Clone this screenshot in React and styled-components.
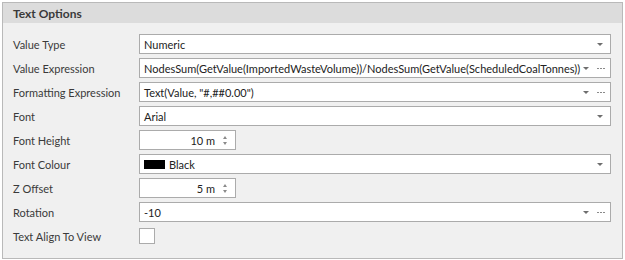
import React from "react";
import styled, { createGlobalStyle } from "styled-components";

const Global = createGlobalStyle`
  html, body { margin: 0; padding: 0; background: #ffffff; }
  body { font-family: "Lato", "Open Sans", sans-serif; font-size: 11px; color: #333; }
`;

const Page = styled.div`
  width: 625px;
  height: 260px;
  padding: 2px 2px 1px 2px;
  box-sizing: border-box;
  background: #ffffff;
`;

const Panel = styled.section`
  border: 1px solid #b9b9b9;
  background: #f0f0f0;
  height: 257px;
  box-sizing: border-box;
  display: flex;
  flex-direction: column;
`;

const Header = styled.div`
  height: 20px;
  background: #dcdcdc;
  display: flex;
  align-items: center;
  padding-left: 10px;
  font-weight: 700;
  font-size: 12px;
  color: #3a3a3a;
`;

const Body = styled.div`
  display: grid;
  grid-template-columns: 126px 472px;
  grid-auto-rows: 20px;
  row-gap: 4px;
  padding: 11px 0 0 10px;
  align-items: center;
`;

const Label = styled.div`
  color: #3a3a3a;
  white-space: nowrap;
`;

const Editor = styled.div`
  box-sizing: border-box;
  height: 20px;
  width: ${(p) => (p.$narrow ? "97px" : "100%")};
  border: 1px solid #ababab;
  background: #ffffff;
  display: flex;
  align-items: center;
  padding: 0 4px 0 4px;
  color: #222;
  white-space: nowrap;
  overflow: hidden;
`;

const Value = styled.span`
  flex: 1;
  min-width: 0;
  text-align: ${(p) => (p.$right ? "right" : "left")};
  padding-right: ${(p) => (p.$right ? "8px" : "0")};
`;

const Buttons = styled.span`
  display: flex;
  align-items: center;
  gap: 8px;
  margin-left: 2px;
  flex: none;
`;

const Arrow = styled.span`
  width: 0;
  height: 0;
  border-left: 3px solid transparent;
  border-right: 3px solid transparent;
  border-top: 3px solid #6e6e6e;
  margin-right: ${(p) => (p.$last ? "3px" : "0")};
`;

const Dots = styled.span`
  display: flex;
  gap: 1px;
  margin-right: 1px;
  & > i {
    width: 2px;
    height: 1px;
    background: #8a8a8a;
    display: block;
  }
`;

const Spin = styled.span`
  display: flex;
  flex-direction: column;
  gap: 3px;
  margin-right: 4px;
`;

const SpinArrow = styled.span`
  width: 0;
  height: 0;
  border-left: 2.5px solid transparent;
  border-right: 2.5px solid transparent;
  ${(p) =>
    p.$up
      ? "border-bottom: 3px solid #8a8a8a;"
      : "border-top: 3px solid #8a8a8a;"}
`;

const Swatch = styled.span`
  width: 21px;
  height: 9px;
  background: #000;
  margin-right: 4px;
  flex: none;
`;

const Check = styled.div`
  width: 16px;
  height: 16px;
  box-sizing: border-box;
  border: 1px solid #ababab;
  background: #fff;
`;

const DotsIcon = () => (
  <Dots>
    <i />
    <i />
    <i />
  </Dots>
);

const Combo = ({ value, ellipsis, children }) => (
  <Editor>
    {children}
    <Value>{value}</Value>
    <Buttons>
      <Arrow $last={!ellipsis} />
      {ellipsis && <DotsIcon />}
    </Buttons>
  </Editor>
);

const Spinner = ({ value }) => (
  <Editor $narrow>
    <Value $right>{value}</Value>
    <Spin>
      <SpinArrow $up />
      <SpinArrow />
    </Spin>
  </Editor>
);

export default function App() {
  return (
    <Page>
      <Global />
      <Panel>
        <Header>Text Options</Header>
        <Body>
          <Label>Value Type</Label>
          <Combo value="Numeric" />
          <Label>Value Expression</Label>
          <Combo
            value="NodesSum(GetValue(ImportedWasteVolume))/NodesSum(GetValue(ScheduledCoalTonnes))"
            ellipsis
          />
          <Label>Formatting Expression</Label>
          <Combo value={'Text(Value, "#,##0.00")'} ellipsis />
          <Label>Font</Label>
          <Combo value="Arial" />
          <Label>Font Height</Label>
          <Spinner value="10 m" />
          <Label>Font Colour</Label>
          <Combo value="Black">
            <Swatch />
          </Combo>
          <Label>Z Offset</Label>
          <Spinner value="5 m" />
          <Label>Rotation</Label>
          <Combo value="-10" ellipsis />
          <Label>Text Align To View</Label>
          <Check />
        </Body>
      </Panel>
    </Page>
  );
}
